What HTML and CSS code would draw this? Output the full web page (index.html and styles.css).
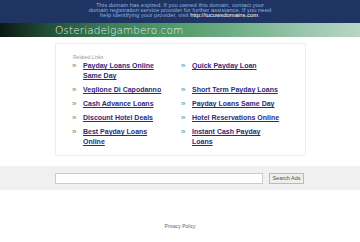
FILE: index.html
```html
<!DOCTYPE html>
<html lang="en">

<head>
    <meta charset="UTF-8">
    <meta name="viewport" content="width=device-width, initial-scale=1.0">
    <title>Osteriadelgambero.com</title>
    <link rel="stylesheet" href="styles.css">
</head>

<body>

    <div class="notice">
        This domain has expired. If you owned this domain, contact your<br>
        domain registration service provider for further assistance. If you need<br>
        help identifying your provider, visit <a href="#">http://tucowsdomains.com</a>.
    </div>

    <div class="header">
        <div class="site-name">Osteriadelgambero.com</div>
    </div>

    <div class="links-box">
        <div class="links-title">Related Links</div>
        <div class="links-grid">
            <div class="link-item"><span class="arrow">&raquo;</span><a href="#">Payday Loans Online Same Day</a></div>
            <div class="link-item"><span class="arrow">&raquo;</span><a href="#">Quick Payday Loan</a></div>
            <div class="link-item"><span class="arrow">&raquo;</span><a href="#">Veglione Di Capodanno</a></div>
            <div class="link-item"><span class="arrow">&raquo;</span><a href="#">Short Term Payday Loans</a></div>
            <div class="link-item"><span class="arrow">&raquo;</span><a href="#">Cash Advance Loans</a></div>
            <div class="link-item"><span class="arrow">&raquo;</span><a href="#">Payday Loans Same Day</a></div>
            <div class="link-item"><span class="arrow">&raquo;</span><a href="#">Discount Hotel Deals</a></div>
            <div class="link-item"><span class="arrow">&raquo;</span><a href="#">Hotel Reservations Online</a></div>
            <div class="link-item"><span class="arrow">&raquo;</span><a href="#">Best Payday Loans Online</a></div>
            <div class="link-item"><span class="arrow">&raquo;</span><a href="#">Instant Cash Payday Loans</a></div>
        </div>
    </div>

    <div class="search-band">
        <div class="search-row">
            <input type="text" class="search-input">
            <button class="search-btn">Search Ads</button>
        </div>
    </div>

    <p class="footer"><a href="#">Privacy Policy</a></p>

</body>

</html>
```

FILE: styles.css
```css
body, html {
    margin: 0;
    padding: 0;
    background-color: #fff;
    font-family: 'Liberation Sans', Arial, sans-serif;
}

.notice {
    background-color: #1f3461;
    color: #8aaee0;
    font-size: 5.9px;
    line-height: 5px;
    text-align: center;
    padding: 3px 0 3px;
    height: 17px;
}

.notice a {
    color: #fff;
    text-decoration: none;
}

.header {
    height: 14px;
    background: linear-gradient(90deg, #0c1712 0%, #1f4a33 12%, #3b7d55 30%, #4f9a68 48%, #6fae86 65%, #9cc6ae 85%, #b8d6c4 100%);
}

.site-name {
    margin-left: 55px;
    color: #e4ece8;
    font-family: 'DejaVu Sans', sans-serif;
    font-weight: 300;
    font-size: 10.5px;
    line-height: 14px;
    letter-spacing: 0.1px;
}

.links-box {
    width: 233px;
    margin: 6px 0 0 55px;
    border: 1px solid #eee;
    padding: 9px 0 8px 16px;
}

.links-title {
    font-size: 5px;
    color: #9a9a9a;
    line-height: 8px;
    margin-left: 1px;
}

.links-grid {
    display: grid;
    grid-template-columns: 109px 110px;
    row-gap: 4px;
}

.link-item {
    display: flex;
    font-size: 7px;
    line-height: 10px;
    font-weight: bold;
}

.arrow {
    width: 11px;
    flex-shrink: 0;
    color: #777;
    font-weight: normal;
    font-size: 8px;
}

.link-item a {
    color: #2d2a80;
    text-decoration: underline;
    width: 84px;
}

.link-item:nth-child(even) a {
    width: 89px;
}

.search-band {
    background-color: #f0f0f0;
    margin-top: 10px;
    height: 24px;
    display: flex;
    align-items: center;
}

.search-row {
    display: flex;
    align-items: center;
    margin-left: 55px;
}

.search-input {
    width: 206px;
    height: 9px;
    border: 1px solid #ccc;
    padding: 0;
    margin: 0;
    background: #fff;
}

.search-btn {
    margin-left: 6px;
    font-size: 5.5px;
    font-family: 'Liberation Sans', Arial, sans-serif;
    padding: 1px 2px;
    height: 11px;
    width: 35px;
    border: 1px solid #bbb;
    background: #eee;
    color: #555;
}

.footer {
    text-align: center;
    font-size: 5px;
    margin: 33px 0 0;
}

.footer a {
    color: #666;
    text-decoration: none;
}
```
